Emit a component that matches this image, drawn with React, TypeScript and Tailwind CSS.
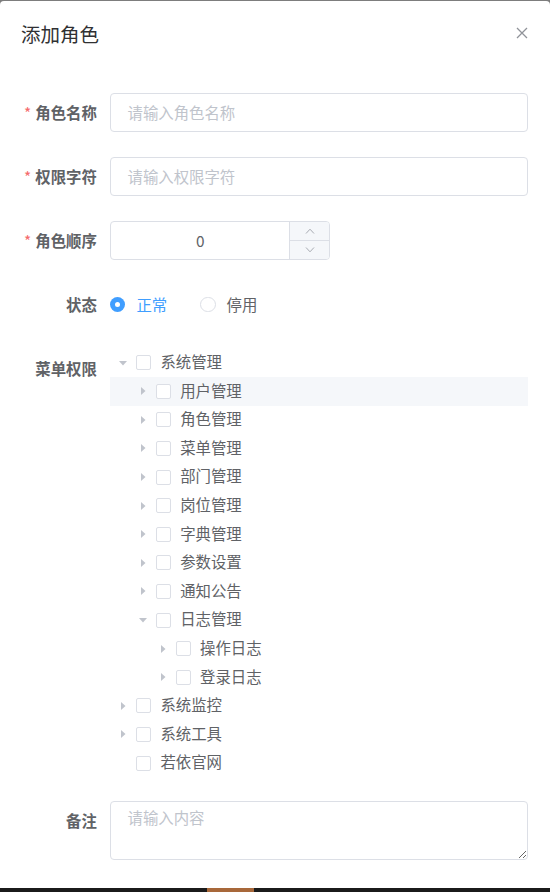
import React from "react";

const font = { fontFamily: '"Noto Sans CJK SC", "Noto Sans", sans-serif' };

function Caret({ open, hidden }: { open?: boolean; hidden?: boolean }) {
  return (
    <span className="w-[26.4px] h-full flex items-center justify-center shrink-0">
      {!hidden && (
        <svg
          width="10"
          height="10"
          viewBox="0 0 10 10"
          className={open ? "rotate-90" : ""}
        >
          <path d="M3 1 L7.5 5 L3 9 Z" fill="#c0c4cc" />
        </svg>
      )}
    </span>
  );
}

function Checkbox() {
  return (
    <span className="w-[15px] h-[15px] border border-[#dcdfe6] rounded-[2px] bg-white shrink-0 mr-[9px]" />
  );
}

type Node = { label: string; level: number; open?: boolean; leaf?: boolean; hl?: boolean };

const nodes: Node[] = [
  { label: "系统管理", level: 0, open: true },
  { label: "用户管理", level: 1, hl: true },
  { label: "角色管理", level: 1 },
  { label: "菜单管理", level: 1 },
  { label: "部门管理", level: 1 },
  { label: "岗位管理", level: 1 },
  { label: "字典管理", level: 1 },
  { label: "参数设置", level: 1 },
  { label: "通知公告", level: 1 },
  { label: "日志管理", level: 1, open: true },
  { label: "操作日志", level: 2 },
  { label: "登录日志", level: 2 },
  { label: "系统监控", level: 0 },
  { label: "系统工具", level: 0 },
  { label: "若依官网", level: 0, leaf: true },
];

const indent = ["pl-0", "pl-[19.8px]", "pl-[39.6px]"];

function Label({ text, req }: { text: string; req?: boolean }) {
  return (
    <div className="w-[88px] shrink-0 pr-[13.2px] text-right font-bold text-[15.4px] leading-[38px] text-[#606266]">
      {req && <span className="text-[#f56c6c] mr-[4px] font-normal">*</span>}
      {text}
    </div>
  );
}

export default function App() {
  return (
    <div className="w-[550px] h-[892px] overflow-hidden bg-[#7d7d7d] flex flex-col" style={font}>
      <div className="h-[1px] shrink-0" />
      <div className="relative bg-white rounded-t-[4px] h-[887px] shrink-0">
        <div className="pt-[20px] px-[21px] pb-[13px]">
          <div className="text-[19.5px] leading-[26.4px] text-[#303133]">添加角色</div>
        </div>
        <div className="absolute top-[26px] right-[22px] w-[12px] h-[12px]">
          <svg width="12" height="12" viewBox="0 0 12 12">
            <path d="M1 1 L11 11 M11 1 L1 11" stroke="#909399" strokeWidth="1.3" />
          </svg>
        </div>

        <div className="pt-[33px] px-[22px]">
          <div className="flex mb-[25px]">
            <Label text="角色名称" req />
            <div className="flex-1 h-[39px] border border-[#dcdfe6] rounded-[4px] flex items-center pl-[16.5px] pb-[1px] text-[15.4px] text-[#c0c4cc]">
              请输入角色名称
            </div>
          </div>
          <div className="flex mb-[25px]">
            <Label text="权限字符" req />
            <div className="flex-1 h-[39px] border border-[#dcdfe6] rounded-[4px] flex items-center pl-[16.5px] pb-[1px] text-[15.4px] text-[#c0c4cc]">
              请输入权限字符
            </div>
          </div>
          <div className="flex mb-[25px]">
            <Label text="角色顺序" req />
            <div className="w-[220px] h-[39px] border border-[#dcdfe6] rounded-[4px] flex overflow-hidden">
              <div className="flex-1 flex items-center justify-center pb-[1px] text-[15.4px] text-[#606266]">
                0
              </div>
              <div className="w-[39.6px] border-l border-[#dcdfe6] bg-[#f5f7fa] flex flex-col">
                <div className="flex-1 flex items-center justify-center border-b border-[#dcdfe6]">
                  <svg width="10" height="6" viewBox="0 0 10 6">
                    <path d="M1 5.5 L5 1.2 L9 5.5" fill="none" stroke="#a8abb2" strokeWidth="1" />
                  </svg>
                </div>
                <div className="flex-1 flex items-center justify-center">
                  <svg width="10" height="6" viewBox="0 0 10 6">
                    <path d="M1 0.5 L5 4.8 L9 0.5" fill="none" stroke="#a8abb2" strokeWidth="1" />
                  </svg>
                </div>
              </div>
            </div>
          </div>
          <div className="flex mb-[25px] h-[39px]">
            <Label text="状态" />
            <div className="flex items-center h-[38px] text-[15.4px]">
              <span className="w-[15.4px] h-[15.4px] rounded-full bg-[#409eff] flex items-center justify-center">
                <span className="w-[5px] h-[5px] rounded-full bg-white" />
              </span>
              <span className="pl-[11px] text-[#409eff] mr-[33px]">正常</span>
              <span className="w-[15.4px] h-[15.4px] rounded-full border border-[#dcdfe6] bg-white" />
              <span className="pl-[11px] text-[#606266]">停用</span>
            </div>
          </div>
          <div className="flex mb-[24px]">
            <Label text="菜单权限" />
            <div className="flex-1 flex flex-col -mt-[1px]">
              {nodes.map((n) => (
                <div
                  key={n.label}
                  className={`h-[28.6px] flex items-center ${indent[n.level]} ${n.hl ? "bg-[#f5f7fa]" : ""}`}
                >
                  <Caret open={n.open} hidden={n.leaf} />
                  <Checkbox />
                  <span className="text-[15.4px] text-[#606266] leading-none -mt-[2px]">{n.label}</span>
                </div>
              ))}
            </div>
          </div>
          <div className="flex">
            <Label text="备注" />
            <textarea
              placeholder="请输入内容"
              rows={2}
              className="flex-1 h-[58.5px] border border-[#dcdfe6] rounded-[4px] px-[16.5px] pt-[4px] pb-[5px] text-[15.4px] leading-[1.5] text-[#606266] placeholder:text-[#c0c4cc] outline-none"
              style={font}
            />
          </div>
        </div>
      </div>
      <div className="flex-1 bg-[#1b1b1b] relative">
        <div className="absolute left-[207px] top-0 w-[47px] h-full bg-[#a8683a]" />
      </div>
    </div>
  );
}
